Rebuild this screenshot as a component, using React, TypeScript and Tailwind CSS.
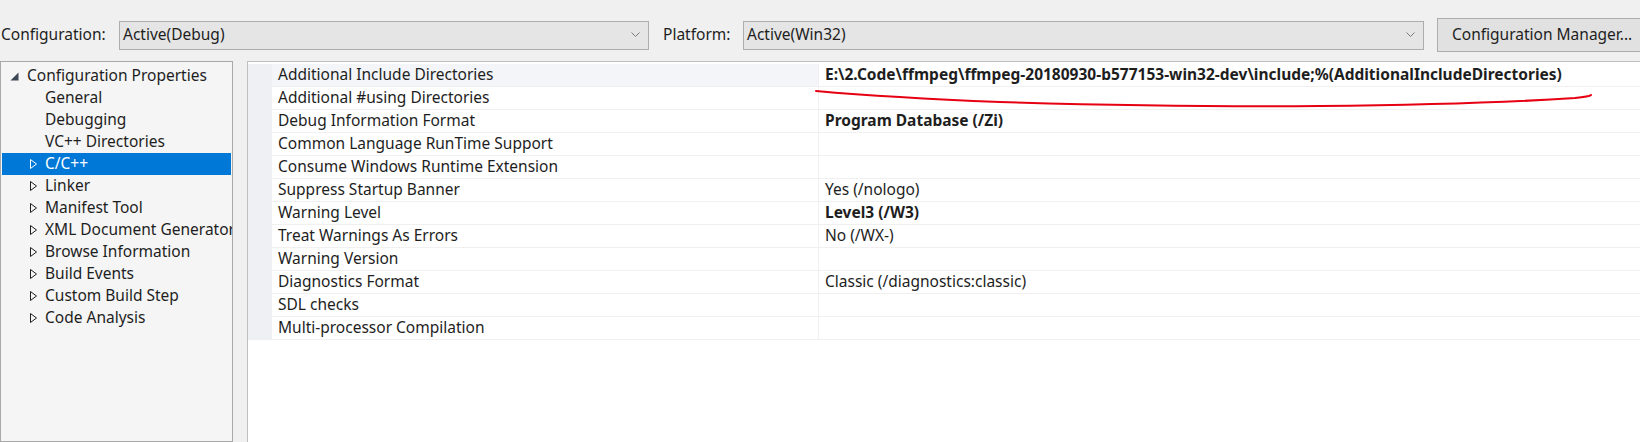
import React from 'react';

type Row = { name: string; value?: string; bold?: boolean };

const rows: Row[] = [
  {
    name: 'Additional Include Directories',
    value: 'E:\\2.Code\\ffmpeg\\ffmpeg-20180930-b577153-win32-dev\\include;%(AdditionalIncludeDirectories)',
    bold: true,
  },
  { name: 'Additional #using Directories' },
  { name: 'Debug Information Format', value: 'Program Database (/Zi)', bold: true },
  { name: 'Common Language RunTime Support' },
  { name: 'Consume Windows Runtime Extension' },
  { name: 'Suppress Startup Banner', value: 'Yes (/nologo)' },
  { name: 'Warning Level', value: 'Level3 (/W3)', bold: true },
  { name: 'Treat Warnings As Errors', value: 'No (/WX-)' },
  { name: 'Warning Version' },
  { name: 'Diagnostics Format', value: 'Classic (/diagnostics:classic)' },
  { name: 'SDL checks' },
  { name: 'Multi-processor Compilation' },
];

const tree: { label: string; arrow?: boolean; selected?: boolean }[] = [
  { label: 'General' },
  { label: 'Debugging' },
  { label: 'VC++ Directories' },
  { label: 'C/C++', arrow: true, selected: true },
  { label: 'Linker', arrow: true },
  { label: 'Manifest Tool', arrow: true },
  { label: 'XML Document Generator', arrow: true },
  { label: 'Browse Information', arrow: true },
  { label: 'Build Events', arrow: true },
  { label: 'Custom Build Step', arrow: true },
  { label: 'Code Analysis', arrow: true },
];

function Chevron() {
  return (
    <svg width="9" height="6" viewBox="0 0 9 6" className="shrink-0">
      <polyline points="0.5,0.5 4.5,4.5 8.5,0.5" fill="none" stroke="#7a7a7a" strokeWidth="1" />
    </svg>
  );
}

function Select({ value, width }: { value: string; width: string }) {
  return (
    <div
      className={`${width} flex h-[29px] shrink-0 items-center justify-between border border-[#adadad] bg-[#e5e5e5] pl-[3px] pr-[8px]`}
    >
      <span>{value}</span>
      <Chevron />
    </div>
  );
}

function Arrow({ white }: { white?: boolean }) {
  return (
    <svg width="7" height="10" viewBox="0 0 7 10" className="shrink-0">
      <polygon
        points="0.5,0.5 6.5,5 0.5,9.5"
        fill="none"
        stroke={white ? '#ffffff' : '#1e1e1e'}
        strokeWidth="1"
      />
    </svg>
  );
}

export default function App() {
  return (
    <div className="h-[442px] w-[1640px] overflow-hidden bg-[#f0f0f0] font-['Noto_Sans',sans-serif] text-[15.5px] leading-none text-[#1e1e1e]">
      <div className="flex h-[61px] items-center pt-[9px]">
        <span className="w-[119px] shrink-0 pl-[1px]">Configuration:</span>
        <Select value="Active(Debug)" width="w-[530px]" />
        <span className="w-[94px] shrink-0 pl-[14px]">Platform:</span>
        <Select value="Active(Win32)" width="w-[681px]" />
        <button className="ml-[13px] flex h-[34px] w-[212px] shrink-0 items-center border border-[#adadad] bg-[#e1e1e1] pl-[14px]">
          Configuration Manager...
        </button>
      </div>

      <div className="relative flex h-[381px]">
        <div className="h-full w-[233px] shrink-0 overflow-hidden border border-[#a9a9a9] bg-[#f5f5f5] pt-[3px]">
          <div className="flex h-[22px] items-center">
            <svg width="9" height="9" viewBox="0 0 9 9" className="ml-[9px] mr-[8px] shrink-0">
              <polygon points="8.5,0.5 8.5,8.5 0.5,8.5" fill="#3d4756" />
            </svg>
            <span className="whitespace-nowrap">Configuration Properties</span>
          </div>
          {tree.map((t) => (
            <div
              key={t.label}
              className={`mx-[1px] flex h-[22px] items-center whitespace-nowrap ${
                t.selected ? 'bg-[#0078d7] text-white' : ''
              }`}
            >
              <div className="flex w-[43px] shrink-0 justify-end pr-[8px]">
                {t.arrow && <Arrow white={t.selected} />}
              </div>
              <span>{t.label}</span>
            </div>
          ))}
        </div>

        <div className="ml-[14px] h-full flex-1 border-l border-t border-[#bfbfbf] bg-white pt-[2px]">
          {rows.map((r, i) => (
            <div key={r.name} className="flex h-[23px] border-b border-[#f0f0f0]">
              <div className="w-[24px] shrink-0 bg-[#eef0f3]" />
              <div
                className={`flex w-[546px] shrink-0 items-center pl-[6px] ${
                  i === 0 ? 'bg-[#f3f5f8]' : ''
                }`}
              >
                {r.name}
              </div>
              <div
                className={`flex flex-1 items-center whitespace-nowrap border-l border-[#f0f0f0] pl-[6px] ${
                  r.bold ? 'font-bold' : ''
                }`}
              >
                {r.value}
              </div>
            </div>
          ))}
        </div>

        <svg
          className="pointer-events-none absolute left-0 top-0"
          width="1640"
          height="381"
          viewBox="0 0 1640 381"
        >
          <path
            d="M816 30 C 850 33, 900 37, 1000 41 C 1100 44, 1200 46, 1320 45 C 1430 44, 1530 40, 1575 37 C 1585 36, 1590 35, 1591 34"
            fill="none"
            stroke="#e60012"
            strokeWidth="2"
            strokeLinecap="round"
          />
        </svg>
      </div>
    </div>
  );
}
